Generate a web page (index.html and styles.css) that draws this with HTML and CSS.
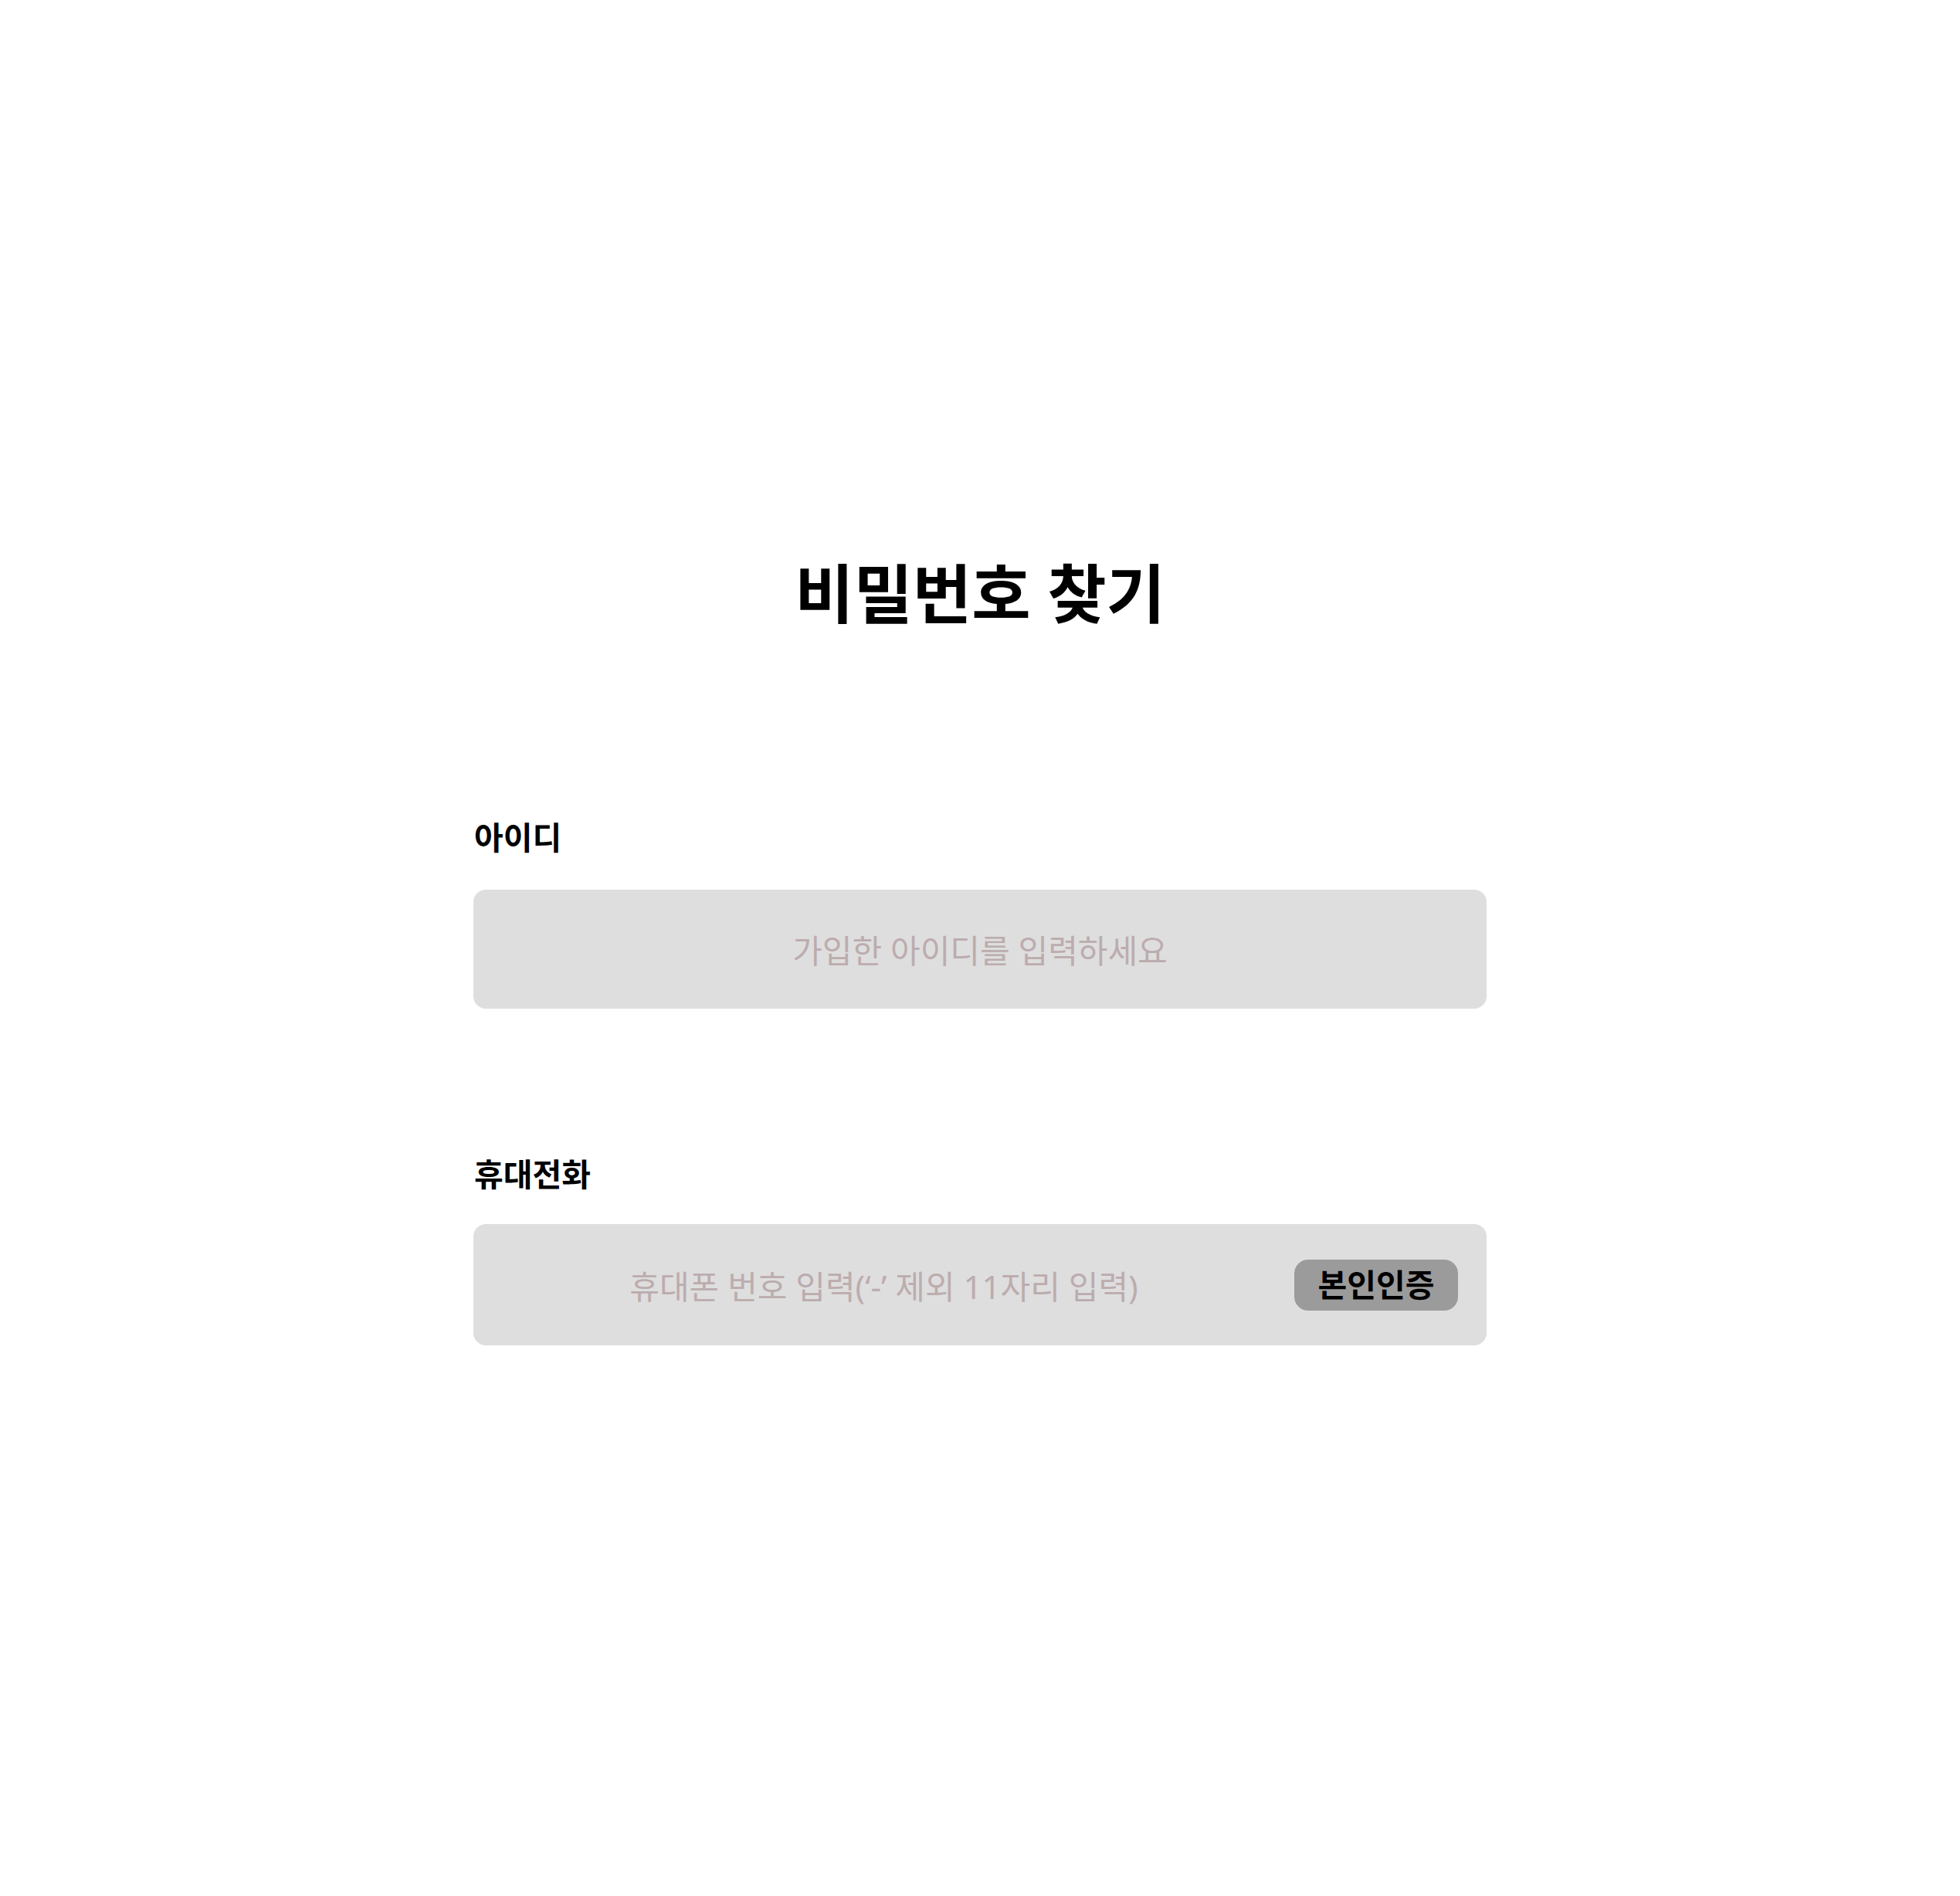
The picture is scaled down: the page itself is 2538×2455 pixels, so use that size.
FILE: index.html
```html
<!DOCTYPE html>
<html lang="ko">
<head>
<meta charset="utf-8">
<title>비밀번호 찾기</title>
<link rel="stylesheet" href="styles.css">
</head>
<body>
<main class="page">
  <h1 class="title">비밀번호 찾기</h1>
  <form class="form">
    <div class="field field-id">
      <label class="label" for="uid">아이디</label>
      <div class="box">
        <input id="uid" class="input" type="text" placeholder="가입한 아이디를 입력하세요">
      </div>
    </div>
    <div class="field field-phone">
      <label class="label" for="phone">휴대전화</label>
      <div class="box box-phone">
        <input id="phone" class="input" type="text" placeholder="휴대폰 번호 입력(‘-’ 제외 11자리 입력)">
        <button type="button" class="verify">본인인증</button>
      </div>
    </div>
  </form>
</main>
</body>
</html>
```

FILE: styles.css
```css
html, body {
  margin: 0;
  padding: 0;
  background: #ffffff;
}

body {
  font-family: "Noto Sans", "Noto Sans CJK KR", sans-serif;
  color: #000;
}

.page {
  width: 1312px;
  margin: 0 auto;
  padding-top: 723px;
  box-sizing: border-box;
}

.title {
  margin: 0;
  font-size: 83px;
  line-height: 90px;
  font-weight: 700;
  text-align: center;
}

.form {
  display: flex;
  flex-direction: column;
  margin-top: 249px;
}

.field {
  display: flex;
  flex-direction: column;
}

.field-phone {
  margin-top: 192px;
}

.label {
  font-size: 41px;
  line-height: 38px;
  font-weight: 700;
  margin-left: 1px;
  padding-top: 3px;
  margin-bottom: 49px;
}

.field-phone .label {
  margin-bottom: 46px;
}

.box {
  display: flex;
  align-items: center;
  height: 154px;
  background: #dedede;
  border-radius: 16px;
  box-sizing: border-box;
}

.box-phone {
  height: 157px;
  padding-right: 37px;
}

.input {
  flex: 1;
  min-width: 0;
  height: 100%;
  box-sizing: border-box;
  border: 0;
  outline: none;
  background: transparent;
  font-family: "Noto Sans", "Noto Sans CJK KR", sans-serif;
  font-size: 42px;
  font-weight: 400;
  text-align: center;
  color: #333;
  padding: 3px 0 0 0;
}

.input::placeholder {
  color: #bcacae;
  opacity: 1;
}

.verify {
  width: 212px;
  height: 66px;
  border: 0;
  border-radius: 18px;
  background: #9b9b9b;
  color: #000;
  font-family: "Noto Sans", "Noto Sans CJK KR", sans-serif;
  font-size: 41px;
  font-weight: 700;
  line-height: 1;
  padding: 0;
  cursor: pointer;
}
```
